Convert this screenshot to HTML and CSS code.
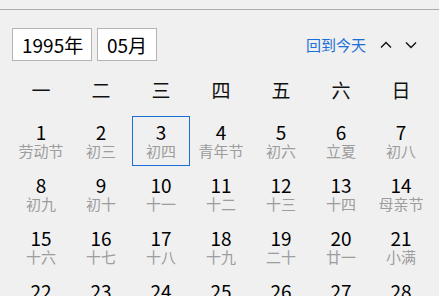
FILE: index.html
```html
<!DOCTYPE html>
<html lang="zh-CN">
<head>
<meta charset="utf-8">
<title>日历</title>
<link rel="stylesheet" href="styles.css">
</head>
<body>
<div class="topline"></div>
<div class="toolbar">
  <div class="field year">1995年</div>
  <div class="field month">05月</div>
  <div class="spacer"></div>
  <a class="today">回到今天</a>
  <span class="arrow"><svg width="12" height="8" viewBox="0 0 12 8"><path d="M1 6.5 L6 1.5 L11 6.5" fill="none" stroke="#111" stroke-width="1.4"/></svg></span>
  <span class="arrow"><svg width="12" height="8" viewBox="0 0 12 8"><path d="M1 1.5 L6 6.5 L11 1.5" fill="none" stroke="#111" stroke-width="1.4"/></svg></span>
</div>
<div class="weekdays">
  <div>一</div><div>二</div><div>三</div><div>四</div><div>五</div><div>六</div><div>日</div>
</div>
<div class="days">
  <div class="day"><span class="num">1</span><span class="lunar">劳动节</span></div>
  <div class="day"><span class="num">2</span><span class="lunar">初三</span></div>
  <div class="day selected"><span class="num">3</span><span class="lunar">初四</span></div>
  <div class="day"><span class="num">4</span><span class="lunar">青年节</span></div>
  <div class="day"><span class="num">5</span><span class="lunar">初六</span></div>
  <div class="day"><span class="num">6</span><span class="lunar">立夏</span></div>
  <div class="day"><span class="num">7</span><span class="lunar">初八</span></div>
  <div class="day"><span class="num">8</span><span class="lunar">初九</span></div>
  <div class="day"><span class="num">9</span><span class="lunar">初十</span></div>
  <div class="day"><span class="num">10</span><span class="lunar">十一</span></div>
  <div class="day"><span class="num">11</span><span class="lunar">十二</span></div>
  <div class="day"><span class="num">12</span><span class="lunar">十三</span></div>
  <div class="day"><span class="num">13</span><span class="lunar">十四</span></div>
  <div class="day"><span class="num">14</span><span class="lunar">母亲节</span></div>
  <div class="day"><span class="num">15</span><span class="lunar">十六</span></div>
  <div class="day"><span class="num">16</span><span class="lunar">十七</span></div>
  <div class="day"><span class="num">17</span><span class="lunar">十八</span></div>
  <div class="day"><span class="num">18</span><span class="lunar">十九</span></div>
  <div class="day"><span class="num">19</span><span class="lunar">二十</span></div>
  <div class="day"><span class="num">20</span><span class="lunar">廿一</span></div>
  <div class="day"><span class="num">21</span><span class="lunar">小满</span></div>
  <div class="day"><span class="num">22</span><span class="lunar">廿三</span></div>
  <div class="day"><span class="num">23</span><span class="lunar">廿四</span></div>
  <div class="day"><span class="num">24</span><span class="lunar">廿五</span></div>
  <div class="day"><span class="num">25</span><span class="lunar">廿六</span></div>
  <div class="day"><span class="num">26</span><span class="lunar">廿七</span></div>
  <div class="day"><span class="num">27</span><span class="lunar">廿八</span></div>
  <div class="day"><span class="num">28</span><span class="lunar">廿九</span></div>
</div>
</body>
</html>
```
FILE: styles.css
```css
html, body {
  margin: 0;
  padding: 0;
  overflow: hidden;
  background: #f0f0f0;
}
body {
  font-family: "Noto Sans CJK SC", "Noto Sans", sans-serif;
  color: #000;
  width: 439px;
  height: 296px;
}
.topline {
  height: 9px;
  border-bottom: 1px solid #acacac;
}
.toolbar {
  display: flex;
  align-items: center;
  margin-top: 18px;
  padding: 0 22px 0 12px;
  height: 33px;
}
.field {
  box-sizing: border-box;
  height: 33px;
  background: #fff;
  border: 1px solid #b4b4b4;
  font-size: 19px;
  line-height: 31px;
  padding-left: 9px;
  color: #000;
}
.year { width: 80px; }
.month { width: 60px; margin-left: 5px; }
.spacer { flex: 1; }
.today {
  font-size: 15px;
  color: #1a6fd6;
  line-height: 20px;
  margin-right: 1px;
}
.arrow {
  display: flex;
  width: 12px;
  height: 8px;
  margin-left: 13px;
}
.weekdays {
  display: grid;
  grid-template-columns: repeat(7, 60px);
  margin: 14px 0 0 11px;
  height: 30px;
  font-size: 19px;
  line-height: 30px;
  text-align: center;
  color: #111;
}
.days {
  display: grid;
  grid-template-columns: repeat(7, 60px);
  grid-auto-rows: 53px;
  margin: 9px 0 0 11px;
}
.day {
  box-sizing: border-box;
  margin: 2px 1px 1px 1px;
  border: 1px solid transparent;
  padding-top: 5px;
  display: flex;
  flex-direction: column;
  align-items: center;
}
.day.selected {
  border-color: #1a6fd6;
}
.num {
  font-size: 19px;
  line-height: 20px;
  color: #000;
}
.lunar {
  font-size: 15px;
  line-height: 18px;
  color: #9d9d9d;
}
```
